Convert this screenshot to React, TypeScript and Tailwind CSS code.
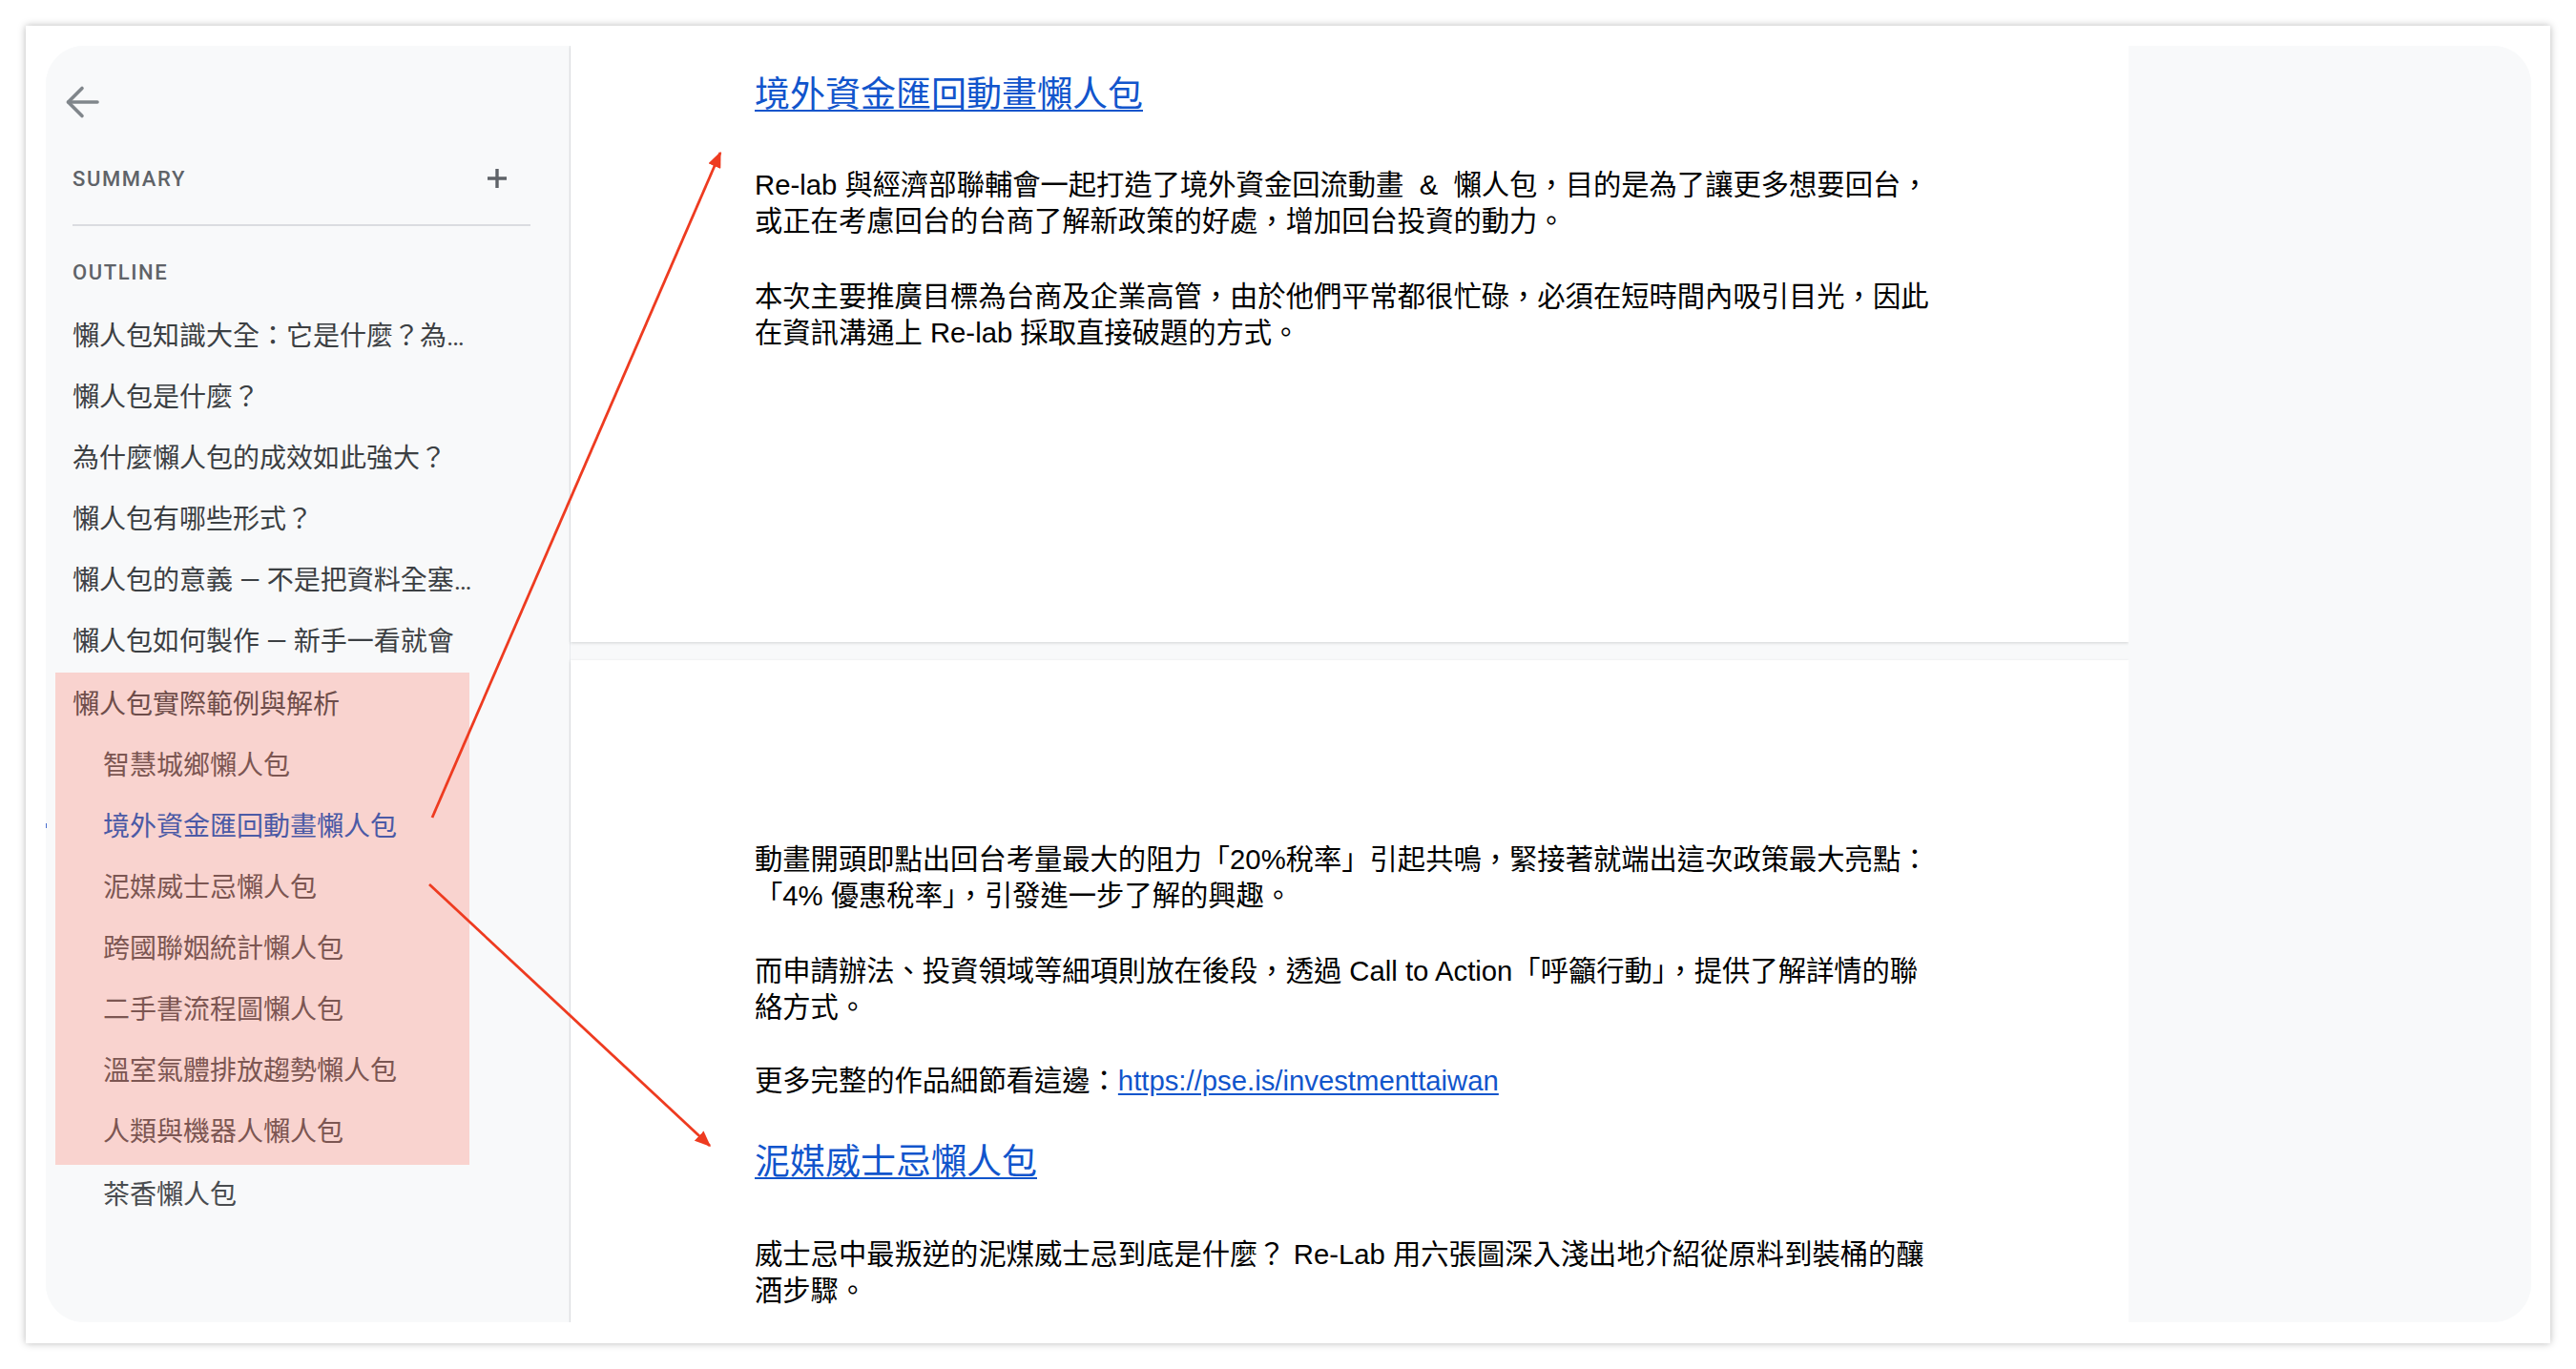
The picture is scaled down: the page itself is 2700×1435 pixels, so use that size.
import React from 'react';

interface OutlineItem {
  label: string;
  sub?: boolean;
  active?: boolean;
}

const topItems: OutlineItem[] = [
  { label: '懶人包知識大全：它是什麼？為…' },
  { label: '懶人包是什麼？' },
  { label: '為什麼懶人包的成效如此強大？' },
  { label: '懶人包有哪些形式？' },
  { label: '懶人包的意義 — 不是把資料全塞…' },
  { label: '懶人包如何製作 — 新手一看就會' },
];

const markedItems: OutlineItem[] = [
  { label: '懶人包實際範例與解析' },
  { label: '智慧城鄉懶人包', sub: true },
  { label: '境外資金匯回動畫懶人包', sub: true, active: true },
  { label: '泥媒威士忌懶人包', sub: true },
  { label: '跨國聯姻統計懶人包', sub: true },
  { label: '二手書流程圖懶人包', sub: true },
  { label: '溫室氣體排放趨勢懶人包', sub: true },
  { label: '人類與機器人懶人包', sub: true },
];

function BackArrow() {
  return (
    <svg width="36" height="36" viewBox="0 0 36 36" fill="none">
      <path d="M34 18H3.5" stroke="#80868b" strokeWidth="3.6" strokeLinecap="round" />
      <path d="M18 3.5L3.5 18L18 32.5" stroke="#80868b" strokeWidth="3.6" strokeLinecap="round" strokeLinejoin="round" />
    </svg>
  );
}

function PlusIcon() {
  return (
    <svg width="22" height="22" viewBox="0 0 22 22" fill="none">
      <path d="M11 1v20M1 11h20" stroke="#5f6368" strokeWidth="3.4" />
    </svg>
  );
}

function Sidebar() {
  return (
    <aside className="w-[550px] h-full flex-shrink-0 bg-[#f8f9fa] border-r border-[#e8eaed] pt-[41px] font-['Roboto','Noto_Sans_CJK_TC',sans-serif]">
      <div className="pl-[20px]">
        <BackArrow />
      </div>
      <div className="mt-[42px] ml-[28px] w-[456px] h-[40px] flex items-center justify-between">
        <span className="text-[22px] font-medium tracking-[1.6px] text-[#5f6368]">SUMMARY</span>
        <PlusIcon />
      </div>
      <div className="mt-[28px] ml-[28px] w-[480px] h-[2px] bg-[#dadce0]" />
      <div className="mt-[28px] ml-[28px] h-[40px] flex items-center">
        <span className="text-[22px] font-medium tracking-[1.6px] text-[#5f6368]">OUTLINE</span>
      </div>
      <div className="mt-[16px]">
        {topItems.map((item) => (
          <div key={item.label} className="h-[64px] pl-[28px] flex items-center text-[28px] text-[#3c4043] whitespace-nowrap">
            {item.label}
          </div>
        ))}
        <div className="ml-[10px] w-[434px] bg-[#f9d3cf] py-[2px]">
          {markedItems.map((item) => (
            <div
              key={item.label}
              className={`relative h-[64px] flex items-center text-[28px] whitespace-nowrap ${
                item.sub ? 'pl-[50px]' : 'pl-[18px]'
              } ${item.active ? 'text-[#4b5aa6]' : item.sub ? 'text-[#7c5652]' : 'text-[#6e4d4a]'}`}
            >
              {item.active && <span className="absolute left-[-10px] top-[28px] w-[1px] h-[5px] bg-[#4a6fd0]" />}
              {item.label}
            </div>
          ))}
        </div>
        <div className="h-[64px] pl-[60px] flex items-center text-[28px] text-[#4a4d50] whitespace-nowrap">茶香懶人包</div>
      </div>
    </aside>
  );
}

function Title({ children }: { children: React.ReactNode }) {
  return (
    <a className="block w-fit text-[37px] leading-[48px] text-[#1155cc] underline decoration-2 underline-offset-[3px]">
      {children}
    </a>
  );
}

function Pages() {
  return (
    <div className="w-[1633px] h-full flex flex-col gap-[19px] font-['Liberation_Sans','Noto_Sans_CJK_TC',sans-serif] text-black">
      <section className="h-[625px] flex-shrink-0 bg-white shadow-[0_1px_3px_rgba(60,64,67,0.2)] pt-[28px] pl-[193px]">
        <Title>境外資金匯回動畫懶人包</Title>
        <div className="w-[1280px] text-[29.3px] leading-[38px]">
          <p className="mt-[51px]">
            Re-lab 與經濟部聯輔會一起打造了境外資金回流動畫 &nbsp;&amp;&nbsp; 懶人包，目的是為了讓更多想要回台，
            <br />
            或正在考慮回台的台商了解新政策的好處，增加回台投資的動力。
          </p>
          <p className="mt-[41px]">
            本次主要推廣目標為台商及企業高管，由於他們平常都很忙碌，必須在短時間內吸引目光，因此
            <br />
            在資訊溝通上 Re-lab 採取直接破題的方式。
          </p>
        </div>
      </section>
      <section className="flex-1 min-h-0 overflow-hidden bg-white shadow-[0_1px_3px_rgba(60,64,67,0.2)] pt-[190px] pl-[193px]">
        <div className="w-[1280px] text-[29.3px] leading-[38px]">
          <p>
            動畫開頭即點出回台考量最大的阻力「20%稅率」引起共鳴，緊接著就端出這次政策最大亮點：
            <br />
            「4% 優惠稅率」，引發進一步了解的興趣。
          </p>
          <p className="mt-[41px]">
            而申請辦法、投資領域等細項則放在後段，透過 Call to Action「呼籲行動」，提供了解詳情的聯
            <br />
            絡方式。
          </p>
          <p className="mt-[39px]">
            更多完整的作品細節看這邊：
            <a className="text-[#1155cc] underline underline-offset-[3px]">https://pse.is/investmenttaiwan</a>
          </p>
        </div>
        <div className="mt-[43px]">
          <Title>泥媒威士忌懶人包</Title>
        </div>
        <div className="w-[1280px] text-[29.3px] leading-[38px]">
          <p className="mt-[53px]">
            威士忌中最叛逆的泥煤威士忌到底是什麼？ Re-Lab 用六張圖深入淺出地介紹從原料到裝桶的釀
            <br />
            酒步驟。
          </p>
        </div>
      </section>
    </div>
  );
}

function Arrows() {
  return (
    <svg className="pointer-events-none absolute left-0 top-0" width="2700" height="1435">
      <defs>
        <marker id="head" markerWidth="6" markerHeight="5" refX="5.5" refY="2.5" orient="auto" markerUnits="strokeWidth">
          <path d="M0,0 L6,2.5 L0,5 z" fill="#ee3b20" />
        </marker>
      </defs>
      <line x1="453" y1="857" x2="755" y2="160" stroke="#ee3b20" strokeWidth="2.8" markerEnd="url(#head)" />
      <line x1="450" y1="927" x2="744" y2="1201" stroke="#ee3b20" strokeWidth="2.8" markerEnd="url(#head)" />
    </svg>
  );
}

export default function App() {
  return (
    <div className="relative w-[2700px] h-[1435px] bg-white p-[27px] overflow-hidden">
      <div className="w-[2646px] h-[1381px] bg-white shadow-[0_0_8px_rgba(0,0,0,0.28)] pt-[21px] pl-[21px]">
        <div className="w-[2605px] h-[1338px] flex rounded-[40px] overflow-hidden bg-[#f8f9fa]">
          <Sidebar />
          <Pages />
          <div className="flex-1 bg-[#f8f9fa]" />
        </div>
      </div>
      <Arrows />
    </div>
  );
}
